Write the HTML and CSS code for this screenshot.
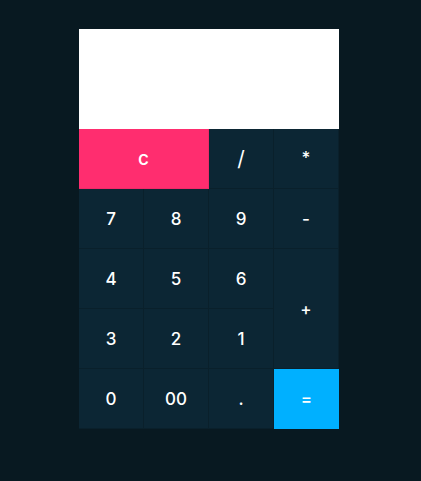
FILE: index.html
```html
<!DOCTYPE html>
<html>
<head>
<meta charset="utf-8">
<link rel="stylesheet" href="styles.css">
</head>
<body>
<div class="calc">
  <div class="display"></div>
  <div class="keys">
    <button class="key clear wide">c</button>
    <button class="key slash">/</button>
    <button class="key op-star">*</button>
    <button class="key">7</button>
    <button class="key">8</button>
    <button class="key">9</button>
    <button class="key">-</button>
    <button class="key">4</button>
    <button class="key">5</button>
    <button class="key">6</button>
    <button class="key plus">+</button>
    <button class="key">3</button>
    <button class="key">2</button>
    <button class="key">1</button>
    <button class="key">0</button>
    <button class="key">00</button>
    <button class="key">.</button>
    <button class="key equal">=</button>
  </div>
</div>
</body>
</html>
```
FILE: styles.css
```css
html, body {
  margin: 0;
  padding: 0;
  background: #081921;
  height: 100%;
}
.calc {
  width: 260px;
  margin: 29px 0 0 79px;
}
.display {
  height: 100px;
  background: #ffffff;
}
.keys {
  display: grid;
  grid-template-columns: repeat(4, 65px);
  grid-auto-rows: 60px;
}
.key {
  margin: 0;
  padding: 0;
  border: none;
  border-right: 1px solid #0a202b;
  border-bottom: 1px solid #0a202b;
  background: #0c2634;
  color: #ffffff;
  font-family: "Inter", "Noto Sans", sans-serif;
  font-size: 17px;
  font-weight: 500;
  display: flex;
  align-items: center;
  justify-content: center;
}
.wide {
  grid-column: span 2;
}
.clear {
  background: #ff2d6f;
  border-color: #f02a68;
  font-size: 19px;
}
.slash {
  font-size: 21px;
  font-weight: 400;
}
.op-star {
  align-items: flex-start;
  padding-top: 19px;
}
.plus {
  grid-row: span 2;
}
.equal {
  background: #00b0ff;
  border: none;
}
```
